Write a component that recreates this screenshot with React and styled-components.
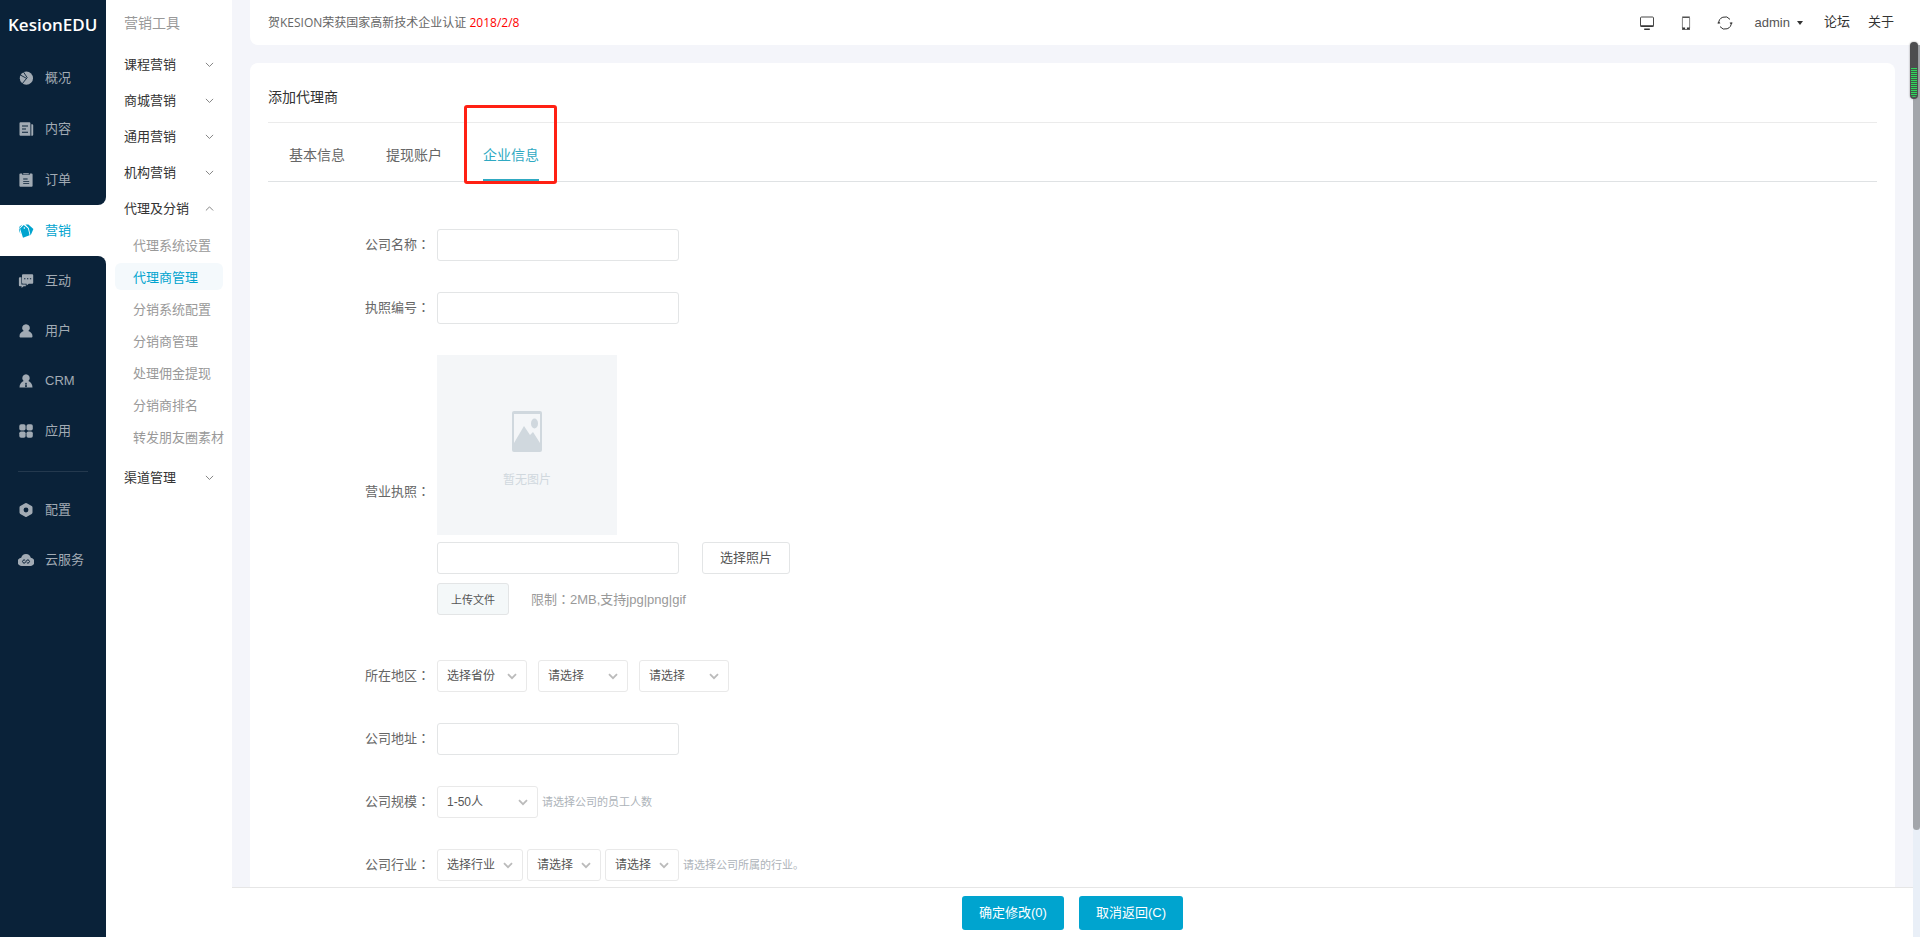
import React, { useState } from 'react'
import styled, { createGlobalStyle, css } from 'styled-components'

const GlobalStyle = createGlobalStyle`
  * {
    box-sizing: border-box;
  }

  body {
    margin: 0;
    overflow: hidden;
    background: #f4f5fa;
    color: #666;
    font-family: 'Open Sans', 'Noto Sans CJK SC', sans-serif;
    font-size: 13px;
    line-height: 20px;
  }

  button, input, select {
    font-family: inherit;
  }

  a {
    color: inherit;
    text-decoration: none;
  }
`

const arial = css`
  font-family: 'Liberation Sans', 'Noto Sans CJK SC', sans-serif;
`

const Page = styled.div`
  display: flex;
  height: 100vh;
`

/* ---------- left dark navigation ---------- */

const Sidebar = styled.nav`
  display: flex;
  flex-direction: column;
  flex: none;
  width: 106px;
  background: #fff;
`

const NavGroup = styled.div`
  background: #0a2239;
  border-radius: ${({ $last }) => ($last ? '0 8px 0 0' : '0 0 8px 0')};
  ${({ $last }) => $last && 'flex: 1;'}
`

const Logo = styled.a`
  display: flex;
  align-items: center;
  height: 52px;
  padding: 0 0 2px 8px;
  color: #fff;
  font-size: 17px;
  font-weight: 600;
`

const NavItem = styled.a`
  display: flex;
  align-items: center;
  gap: 11px;
  height: ${({ $tall }) => ($tall ? '51px' : '50px')};
  padding-left: 18px;
  color: ${({ $active }) => ($active ? '#00a4cf' : '#a2abb4')};
  ${arial}

  svg {
    flex: none;
    width: 16px;
    height: 16px;
  }
`

const NavDivider = styled.hr`
  height: 1px;
  margin: 15px 18px 13px;
  border: 0;
  background: #24394e;
`

/* ---------- second level menu ---------- */

const SubMenu = styled.aside`
  flex: none;
  width: 126px;
  background: #fff;
`

const SubTitle = styled.h2`
  height: 45px;
  margin: 0;
  padding: 13px 0 0 18px;
  color: #999;
  font-size: 14px;
  font-weight: 400;
`

const MenuToggle = styled.button`
  display: flex;
  align-items: center;
  justify-content: space-between;
  width: 100%;
  height: 36px;
  padding: 0 18px;
  border: 0;
  background: none;
  color: #333;
  font-size: 13px;
  cursor: pointer;

  svg {
    width: 9px;
    height: 9px;
    margin-top: 3px;
    color: #777;
  }
`

const SubList = styled.ul`
  display: flex;
  flex-direction: column;
  gap: 5px;
  margin: 0;
  padding: 6px 9px 8px;
  list-style: none;
`

const SubLink = styled.a`
  display: flex;
  align-items: center;
  height: 27px;
  padding-left: 18px;
  border-radius: 6px;
  white-space: nowrap;
  color: ${({ $active }) => ($active ? '#00a4cf' : '#999')};
  background: ${({ $active }) => ($active ? '#f4f9fc' : 'none')};
`

/* ---------- header ---------- */

const Main = styled.div`
  display: flex;
  flex-direction: column;
  flex: 1;
  min-width: 0;
`

const Header = styled.header`
  display: flex;
  align-items: center;
  justify-content: space-between;
  flex: none;
  height: 45px;
  margin-left: 18px;
  padding: 0 26px 0 18px;
  border-radius: 0 0 0 8px;
  background: #fff;
`

const Notice = styled.a`
  font-size: 12px;

  span {
    color: #f00;
  }
`

const Tools = styled.div`
  display: flex;
  align-items: center;
  gap: 21px;
  color: #333;
  ${arial}
`

const IconButton = styled.button`
  display: flex;
  padding: 0;
  border: 0;
  background: none;
  color: #333;
  cursor: pointer;

  svg {
    width: 18px;
    height: 18px;
  }
`

const UserButton = styled.button`
  display: flex;
  align-items: center;
  gap: 7px;
  padding: 0;
  border: 0;
  background: none;
  color: #555;
  font-size: 13px;
  cursor: pointer;

  &::after {
    content: '';
    border: 3px solid transparent;
    border-top: 4px solid #333;
    border-bottom: 0;
  }
`

const Links = styled.div`
  display: flex;
  gap: 18px;
  padding-bottom: 2px;
`

/* ---------- content ---------- */

const Body = styled.div`
  display: flex;
  flex: 1;
  min-height: 0;
`

const Column = styled.main`
  display: flex;
  flex-direction: column;
  flex: 1;
  min-width: 0;
`

const Scroller = styled.div`
  flex: 1;
  min-height: 0;
  padding: 18px 18px 0;
  overflow: hidden;
`

const Card = styled.section`
  min-height: 100%;
  padding: 0 18px 40px;
  border-radius: 8px;
  background: #fff;
`

const CardTitle = styled.h1`
  height: 60px;
  margin: 0;
  padding-top: 24px;
  border-bottom: 1px solid #ebebeb;
  color: #333;
  font-size: 14px;
  font-weight: 400;
`

const Tabs = styled.div`
  display: flex;
  gap: 41px;
  height: 59px;
  padding-left: 21px;
  border-bottom: 1px solid #dfe2e4;
`

const Tab = styled.button`
  position: relative;
  height: 58px;
  padding: 6px 0 0;
  border: 0;
  border-bottom: 2px solid ${({ $active }) => ($active ? '#2fa9c2' : 'transparent')};
  background: none;
  color: ${({ $active }) => ($active ? '#2fa9c2' : '#666')};
  font-size: 14px;
  cursor: pointer;
`

/* red frame lying over the highlighted tab */
const Marker = styled.span`
  position: absolute;
  inset: -18px -18px -5px -19px;
  border: 3px solid #ff2013;
  border-radius: 3px;
  pointer-events: none;
`

const Form = styled.form`
  display: flex;
  flex-direction: column;
  gap: 31px;
  padding-top: 47px;
`

const Row = styled.div`
  display: flex;
  align-items: center;
`

const LabelText = styled.label`
  flex: none;
  width: 162px;
  margin-right: 7px;
  padding-bottom: 2px;
  text-align: right;
`

/* the TC face centres the full-width colon in its box */
const Colon = styled.span`
  font-family: 'Noto Sans CJK TC', sans-serif;
`

const control = css`
  height: 32px;
  border: 1px solid #e3e5e6;
  border-radius: 3px;
  background: #fff;
  color: #555;
`

const TextInput = styled.input`
  ${control}
  width: 242px;
  padding: 0 10px;
  font-size: 13px;
`

const Selects = styled.div`
  display: flex;
  gap: ${({ $gap }) => $gap}px;
`

const SelectBox = styled.span`
  position: relative;
  display: flex;
  width: ${({ $width }) => $width}px;

  select {
    ${control}
    ${arial}
    width: 100%;
    padding: 0 20px 0 9px;
    border-color: #e9e9e9;
    font-size: 12px;
    appearance: none;
  }

  svg {
    position: absolute;
    top: 11px;
    right: 10px;
    width: 10px;
    height: 10px;
    color: #bbb;
    pointer-events: none;
  }
`

const Hint = styled.span`
  margin-left: 4px;
  color: #adb3b9;
  font-size: 11px;
`

const Upload = styled.div`
  display: flex;
  flex-direction: column;
  padding-bottom: 14px;
`

const Preview = styled.div`
  display: flex;
  flex-direction: column;
  align-items: center;
  gap: 18px;
  width: 180px;
  height: 180px;
  padding-top: 56px;
  background: #f4f6f8;
  color: #d0d8de;
  font-size: 12px;

  svg {
    width: 30px;
    height: 41px;
  }
`

const UploadLine = styled.div`
  display: flex;
  align-items: center;
  gap: ${({ $gap }) => $gap}px;
  margin-top: ${({ $top }) => $top}px;
`

const PickButton = styled.button`
  ${control}
  width: 88px;
  padding: 0 0 3px;
  font-size: 13px;
  cursor: pointer;
`

const UploadButton = styled.button`
  ${control}
  width: 72px;
  padding: 0;
  background: #f4f8f9;
  font-size: 11px;
  cursor: pointer;
`

const Limit = styled.span`
  color: #999;
  ${arial}
`

const Footer = styled.footer`
  display: flex;
  align-items: center;
  justify-content: center;
  gap: 15px;
  flex: none;
  height: 50px;
  border-top: 1px solid #e6e6e6;
  background: #fff;
`

const PrimaryButton = styled.button`
  height: 34px;
  padding: 0 17px 2px;
  border: 0;
  border-radius: 3px;
  background: #00a4cf;
  color: #fff;
  font-size: 13px;
  ${arial}
  cursor: pointer;
`

const ScrollTrack = styled.div`
  flex: none;
  width: 7px;
  background: #e9eff7;
`

const ScrollThumb = styled.div`
  height: 88%;
  border-radius: 0 0 4px 4px;
  background: #a3a6ab;
`

/* small level meter floating above the scroll bar */
const Meter = styled.div`
  position: fixed;
  top: 42px;
  right: 2px;
  width: 8px;
  height: 57px;
  padding: 26px 1px 1px;
  border-radius: 4px;
  background: #4d4d4f;
  box-shadow: 0 0 2px #888;

  &::after {
    content: '';
    display: block;
    height: 29px;
    border-radius: 0 0 3px 3px;
    background: repeating-linear-gradient(#2fd75c 0 1px, #3f5a46 1px 2px);
  }
`

/* ---------- icons ---------- */

const Svg = (props) => <svg viewBox="0 0 16 16" fill="currentColor" aria-hidden="true" {...props} />

const icons = {
  overview: (
    <Svg>
      <circle cx="8.4" cy="8.2" r="6.6" />
      <path d="M5.2 1.6 9.2 7.6 4.2 13.8M1.6 4.6 8.6 8.4" fill="none" stroke="#0a2239" strokeWidth=".9" />
    </Svg>
  ),
  content: (
    <Svg>
      <path fillRule="evenodd" d="M2.5 1.2H11.4a1 1 0 0 1 1 1v12.6H2.5a1 1 0 0 1-1-1V2.2a1 1 0 0 1 1-1ZM4 4.6v1h6v-1ZM4 7.6v1h4v-1ZM4 10.8v1h6v-1Z" />
      <path d="M13.3 3.2h.9a1 1 0 0 1 1 1v9.6a1 1 0 0 1-1 1h-.9Z" />
    </Svg>
  ),
  order: (
    <Svg>
      <path fillRule="evenodd" d="M2.4 1.4h1.8v1.4h7.6V1.4h1.8a1 1 0 0 1 1 1v11.4a1 1 0 0 1-1 1H2.4a1 1 0 0 1-1-1V2.4a1 1 0 0 1 1-1Zm2.8 5.2v1h4.4v-1ZM5.2 8.9v.9h6v-.9Zm0 2.3v.9h6v-.9Z" />
      <path d="M5.2 1.2h5.6v1.1H5.2Z" />
    </Svg>
  ),
  marketing: (
    <Svg>
      <path fillRule="evenodd" d="M5.8 2 10 5.4l1.6 6.8-6.6 2.6L2 5.6Zm.5 2.2a.8.8 0 1 0 .1 1.6.8.8 0 0 0-.1-1.6Z" />
      <path d="M4.4 1.6 1.6 3.4.9 6.8l1.5 4.4L1.5 5.2ZM7.4 1.6l3-.2L15.4 6l-2.8 6.4L10.8 5Z" />
    </Svg>
  ),
  interact: (
    <Svg>
      <path fillRule="evenodd" d="M5 1.2h9.2a1 1 0 0 1 1 1v7.6a1 1 0 0 1-1 1h-3.4l-2.2 1.8v-1.8H5a1 1 0 0 1-1-1V2.2a1 1 0 0 1 1-1Zm1.1 4v1.1h1.3V5.2Zm2.9 0v1.1h1.3V5.2Zm2.9 0v1.1h1.3V5.2Z" />
      <path d="M1.9 4.2h1.5v7.2h4.4v1.8H5.6l-2 1.7v-1.7H1.9a1 1 0 0 1-1-1v-7a1 1 0 0 1 1-1Z" />
    </Svg>
  ),
  user: (
    <Svg>
      <path d="M8 1.2a3.8 3.8 0 0 1 2.3 6.9c2.4.7 4.2 2.6 4.2 5.1 0 .9-.5 1.3-1.3 1.3H2.8c-.8 0-1.3-.4-1.3-1.3 0-2.5 1.8-4.4 4.2-5.1A3.8 3.8 0 0 1 8 1.2Z" />
    </Svg>
  ),
  crm: (
    <Svg>
      <path fillRule="evenodd" d="M8 1.2a3.8 3.8 0 0 1 2.4 6.7c2.4.8 4.1 3.4 4.1 6.6h-13c0-3.2 1.7-5.8 4.1-6.6A3.8 3.8 0 0 1 8 1.2Zm0 8.2-.9 1 .5.8-.6 2.3 1 .8 1-.8-.6-2.3.5-.8Z" />
    </Svg>
  ),
  apps: (
    <Svg>
      <rect x="1.3" y="1.3" width="6.3" height="6.3" rx="1.8" />
      <rect x="8.5" y="1.3" width="6.3" height="6.3" rx="1.8" />
      <rect x="1.3" y="8.5" width="6.3" height="6.3" rx="1.8" />
      <rect x="8.5" y="8.5" width="6.3" height="6.3" rx="1.8" />
    </Svg>
  ),
  config: (
    <Svg>
      <path fillRule="evenodd" d="M7.2 1.2a1.6 1.6 0 0 1 1.6 0l4.9 2.8c.5.3.8.8.8 1.4v5.2c0 .6-.3 1.1-.8 1.4l-4.9 2.8c-.5.3-1.1.3-1.6 0L2.3 12c-.5-.3-.8-.8-.8-1.4V5.4c0-.6.3-1.1.8-1.4ZM8 5.6a2.4 2.4 0 1 0 0 4.8 2.4 2.4 0 0 0 0-4.8Z" />
    </Svg>
  ),
  cloud: (
    <Svg>
      <path d="M8 2a5 5 0 0 1 4.8 3.8 4.1 4.1 0 0 1-.9 8.2H4.1a4.1 4.1 0 0 1-.9-8.2A5 5 0 0 1 8 2Z" />
      <path d="M7.2 8.3a1.6 1.6 0 1 0 0 2.4l1.6-2.4a1.6 1.6 0 1 1 0 2.4" fill="none" stroke="#0a2239" strokeWidth="1" />
    </Svg>
  ),
}

const Chevron = ({ up, bold }) => (
  <svg viewBox="0 0 10 10" fill="none" stroke="currentColor" strokeWidth={bold ? 1.8 : 1} aria-hidden="true">
    <path d={up ? 'M1 7.2 5 3.2 9 7.2' : 'M1 3.2 5 7.2 9 3.2'} />
  </svg>
)

const MonitorIcon = () => (
  <svg viewBox="0 0 18 18" fill="none" stroke="currentColor" aria-hidden="true">
    <rect x="2.5" y="3" width="13" height="9.5" rx="1" strokeWidth=".9" />
    <path d="M2.5 12h13M6.2 15.2h5.6" strokeWidth="1.4" />
  </svg>
)

const PhoneIcon = () => (
  <svg viewBox="0 0 18 18" fill="none" stroke="currentColor" aria-hidden="true">
    <path d="M5.4 4v10M12.6 4v10" strokeWidth=".6" />
    <path d="M5.2 3.2h7.6" strokeWidth="1.3" />
    <path d="M5.2 14.4h2.9m1.8 0h2.9" strokeWidth="1.9" />
    <path d="M5 15.5h8" strokeWidth=".7" />
  </svg>
)

const RefreshIcon = () => (
  <svg viewBox="0 0 18 18" fill="none" stroke="currentColor" aria-hidden="true">
    <path d="M2.8 9.5A6.2 6.2 0 0 1 14 5.4M15.2 8.5A6.2 6.2 0 0 1 4 12.6" strokeWidth="1" />
    <path d="m1.5 9.2 1.3-1.5 1.4 1.5ZM13.8 8.8l1.4 1.5 1.3-1.5Z" fill="currentColor" strokeWidth=".3" />
  </svg>
)

const PictureIcon = () => (
  <svg viewBox="0 0 30 41" fill="currentColor" aria-hidden="true">
    <path fillRule="evenodd" d="M2 0h26a2 2 0 0 1 2 2v37a2 2 0 0 1-2 2H2a2 2 0 0 1-2-2V2a2 2 0 0 1 2-2Zm0 3v29L12 15l6 9 3-3 7 11V3Z" />
    <ellipse cx="22.5" cy="12.5" rx="3.5" ry="5" />
  </svg>
)

/* ---------- data ---------- */

const navTop = [
  ['overview', '概况'],
  ['content', '内容'],
  ['order', '订单'],
]

const navMiddle = [
  ['interact', '互动'],
  ['user', '用户'],
  ['crm', 'CRM'],
  ['apps', '应用'],
]

const navBottom = [
  ['config', '配置'],
  ['cloud', '云服务'],
]

const menu = [
  { name: '课程营销' },
  { name: '商城营销' },
  { name: '通用营销' },
  { name: '机构营销' },
  {
    name: '代理及分销',
    children: ['代理系统设置', '代理商管理', '分销系统配置', '分销商管理', '处理佣金提现', '分销商排名', '转发朋友圈素材'],
  },
  { name: '渠道管理' },
]

const tabs = ['基本信息', '提现账户', '企业信息']

const renderNav = ([icon, name], tall) => (
  <NavItem href="#" key={icon} $tall={tall}>
    {icons[icon]}
    {name}
  </NavItem>
)

function Label({ children, ...rest }) {
  return (
    <LabelText {...rest}>
      {children}<Colon>：</Colon>
    </LabelText>
  )
}

function Select({ width, value, ...rest }) {
  return (
    <SelectBox $width={width}>
      <select {...rest}>
        <option>{value}</option>
      </select>
      <Chevron bold />
    </SelectBox>
  )
}

function SideMenu() {
  const [open, setOpen] = useState('代理及分销')

  return (
    <SubMenu>
      <SubTitle>营销工具</SubTitle>
      {menu.map(({ name, children }) => (
        <div key={name}>
          <MenuToggle
            type="button"
            aria-expanded={open === name}
            onClick={() => setOpen((prev) => (prev === name ? '' : name))}
          >
            {name}
            <Chevron up={open === name} />
          </MenuToggle>
          {children && open === name && (
            <SubList>
              {children.map((item) => (
                <li key={item}>
                  <SubLink href="#" $active={item === '代理商管理'}>{item}</SubLink>
                </li>
              ))}
            </SubList>
          )}
        </div>
      ))}
    </SubMenu>
  )
}

function CompanyForm() {
  return (
    <Form id="company" onSubmit={(e) => e.preventDefault()}>
      <Row>
        <Label htmlFor="name">公司名称</Label>
        <TextInput id="name" type="text" />
      </Row>
      <Row>
        <Label htmlFor="license-no">执照编号</Label>
        <TextInput id="license-no" type="text" />
      </Row>
      <Row>
        <Label htmlFor="license">营业执照</Label>
        <Upload>
          <Preview>
            <PictureIcon />
            暂无图片
          </Preview>
          <UploadLine $gap={23} $top={7}>
            <TextInput id="license" type="text" />
            <PickButton type="button">选择照片</PickButton>
          </UploadLine>
          <UploadLine $gap={22} $top={9}>
            <UploadButton type="button">上传文件</UploadButton>
            <Limit>限制<Colon>：</Colon>2MB,支持jpg|png|gif</Limit>
          </UploadLine>
        </Upload>
      </Row>
      <Row>
        <Label htmlFor="province">所在地区</Label>
        <Selects $gap={11}>
          <Select id="province" width={90} value="选择省份" />
          <Select aria-label="城市" width={90} value="请选择" />
          <Select aria-label="区县" width={90} value="请选择" />
        </Selects>
      </Row>
      <Row>
        <Label htmlFor="address">公司地址</Label>
        <TextInput id="address" type="text" />
      </Row>
      <Row>
        <Label htmlFor="scale">公司规模</Label>
        <Select id="scale" width={101} value="1-50人" />
        <Hint>请选择公司的员工人数</Hint>
      </Row>
      <Row>
        <Label htmlFor="industry">公司行业</Label>
        <Selects $gap={4}>
          <Select id="industry" width={86} value="选择行业" />
          <Select aria-label="二级行业" width={74} value="请选择" />
          <Select aria-label="三级行业" width={74} value="请选择" />
        </Selects>
        <Hint>请选择公司所属的行业。</Hint>
      </Row>
    </Form>
  )
}

function App() {
  const [tab, setTab] = useState('企业信息')

  return (
    <Page>
      <GlobalStyle />
      <Sidebar>
        <NavGroup>
          <Logo href="#">KesionEDU</Logo>
          {navTop.map((item) => renderNav(item, true))}
        </NavGroup>
        <NavItem href="#" $active $tall>
          {icons.marketing}
          营销
        </NavItem>
        <NavGroup $last>
          {navMiddle.map((item) => renderNav(item))}
          <NavDivider />
          {navBottom.map((item) => renderNav(item))}
        </NavGroup>
      </Sidebar>

      <SideMenu />

      <Main>
        <Header>
          <Notice href="#">
            贺KESION荣获国家高新技术企业认证 <span>2018/2/8</span>
          </Notice>
          <Tools>
            <IconButton type="button" aria-label="电脑版"><MonitorIcon /></IconButton>
            <IconButton type="button" aria-label="手机版"><PhoneIcon /></IconButton>
            <IconButton type="button" aria-label="刷新"><RefreshIcon /></IconButton>
            <UserButton type="button">admin</UserButton>
            <Links>
              <a href="#">论坛</a>
              <a href="#">关于</a>
            </Links>
          </Tools>
        </Header>
        <Body>
          <Column>
            <Scroller>
              <Card>
                <CardTitle>添加代理商</CardTitle>
                <Tabs role="tablist">
                  {tabs.map((name) => (
                    <Tab
                      key={name}
                      type="button"
                      role="tab"
                      aria-selected={tab === name}
                      $active={tab === name}
                      onClick={() => setTab(name)}
                    >
                      {name}
                      {name === '企业信息' && <Marker />}
                    </Tab>
                  ))}
                </Tabs>
                <CompanyForm />
              </Card>
            </Scroller>
            <Footer>
              <PrimaryButton type="submit" form="company">确定修改(0)</PrimaryButton>
              <PrimaryButton type="button">取消返回(C)</PrimaryButton>
            </Footer>
          </Column>
          <ScrollTrack>
            <ScrollThumb />
          </ScrollTrack>
        </Body>
      </Main>
      <Meter />
    </Page>
  )
}

export default App
